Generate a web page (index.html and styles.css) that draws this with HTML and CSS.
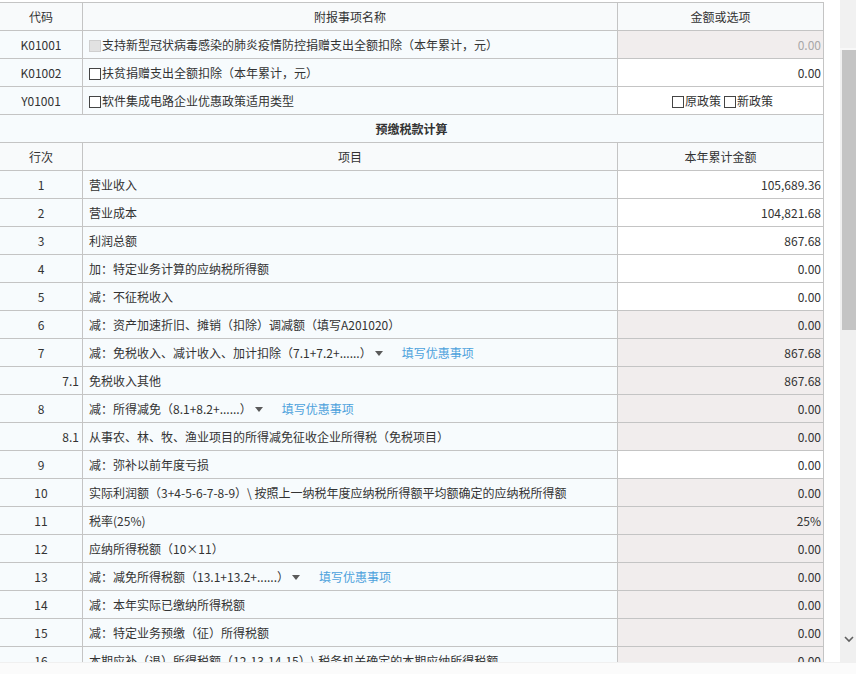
FILE: index.html
```html
<!DOCTYPE html>
<html lang="zh-CN">
<head>
<meta charset="utf-8">
<title>预缴税款计算</title>
<link rel="stylesheet" href="styles.css">
</head>
<body>
<div class="page">
  <div class="screen">
    <div class="viewport">
      <table class="grid">
        <colgroup><col class="c1"><col class="c2"><col class="c3"></colgroup>
        <tr class="head"><th>代码</th><th>附报事项名称</th><th>金额或选项</th></tr>
        <tr><td class="no">K01001</td><td class="name"><span class="cb dis"></span>支持新型冠状病毒感染的肺炎疫情防控捐赠支出全额扣除（本年累计，元）</td><td class="amt ro muted">0.00</td></tr>
        <tr><td class="no">K01002</td><td class="name"><span class="cb"></span>扶贫捐赠支出全额扣除（本年累计，元）</td><td class="amt">0.00</td></tr>
        <tr><td class="no">Y01001</td><td class="name"><span class="cb"></span>软件集成电路企业优惠政策适用类型</td><td class="opts"><span class="cb"></span>原政策<span class="cb gap"></span>新政策</td></tr>
        <tr class="section"><td colspan="3">预缴税款计算</td></tr>
        <tr class="head"><th>行次</th><th>项目</th><th>本年累计金额</th></tr>
        <tr><td class="no">1</td><td class="name">营业收入</td><td class="amt">105,689.36</td></tr>
        <tr><td class="no">2</td><td class="name">营业成本</td><td class="amt">104,821.68</td></tr>
        <tr><td class="no">3</td><td class="name">利润总额</td><td class="amt">867.68</td></tr>
        <tr><td class="no">4</td><td class="name">加：特定业务计算的应纳税所得额</td><td class="amt">0.00</td></tr>
        <tr><td class="no">5</td><td class="name">减：不征税收入</td><td class="amt">0.00</td></tr>
        <tr><td class="no">6</td><td class="name">减：资产加速折旧、摊销（扣除）调减额（填写A201020）</td><td class="amt ro">0.00</td></tr>
        <tr><td class="no">7</td><td class="name">减：免税收入、减计收入、加计扣除（7.1+7.2+......）<span class="caret"></span><a class="link" href="#">填写优惠事项</a></td><td class="amt ro">867.68</td></tr>
        <tr><td class="no sub">7.1</td><td class="name">免税收入其他</td><td class="amt ro">867.68</td></tr>
        <tr><td class="no">8</td><td class="name">减：所得减免（8.1+8.2+......）<span class="caret"></span><a class="link" href="#">填写优惠事项</a></td><td class="amt ro">0.00</td></tr>
        <tr><td class="no sub">8.1</td><td class="name">从事农、林、牧、渔业项目的所得减免征收企业所得税（免税项目）</td><td class="amt ro">0.00</td></tr>
        <tr><td class="no">9</td><td class="name">减：弥补以前年度亏损</td><td class="amt">0.00</td></tr>
        <tr><td class="no">10</td><td class="name">实际利润额（3+4-5-6-7-8-9）\ 按照上一纳税年度应纳税所得额平均额确定的应纳税所得额</td><td class="amt ro">0.00</td></tr>
        <tr><td class="no">11</td><td class="name">税率(25%)</td><td class="amt ro">25%</td></tr>
        <tr><td class="no">12</td><td class="name">应纳所得税额（10×11）</td><td class="amt ro">0.00</td></tr>
        <tr><td class="no">13</td><td class="name">减：减免所得税额（13.1+13.2+......）<span class="caret"></span><a class="link" href="#">填写优惠事项</a></td><td class="amt ro">0.00</td></tr>
        <tr><td class="no">14</td><td class="name">减：本年实际已缴纳所得税额</td><td class="amt ro">0.00</td></tr>
        <tr><td class="no">15</td><td class="name">减：特定业务预缴（征）所得税额</td><td class="amt ro">0.00</td></tr>
        <tr><td class="no">16</td><td class="name">本期应补（退）所得税额（12-13-14-15）\ 税务机关确定的本期应纳所得税额</td><td class="amt ro">0.00</td></tr>
      </table>
    </div>
    <div class="scrollbar">
      <div class="track-top"></div>
      <div class="thumb"></div>
      <div class="track-rest">
        <svg class="arrow" width="10" height="7" viewBox="0 0 10 7"><polyline points="1,1 5,5 9,1" fill="none" stroke="#606060" stroke-width="1.6"/></svg>
      </div>
    </div>
  </div>
  <div class="footer"></div>
</div>
</body>
</html>
```
FILE: styles.css
```css
* { box-sizing: border-box; }
html, body { margin: 0; padding: 0; background: #fff; }
body {
  font-family: "Noto Sans CJK SC", "Noto Sans", sans-serif;
  font-size: 12px;
  color: #333;
}
.page { width: 856px; height: 674px; display: flex; flex-direction: column; overflow: hidden; }
.screen { display: flex; height: 662px; }
.viewport { width: 840px; height: 662px; overflow: hidden; padding-top: 2px; }
.grid {
  width: 824px;
  table-layout: fixed;
  border-collapse: separate;
  border-spacing: 0;
  border-top: 1px solid #c4c4c4;
}
.grid col.c1 { width: 83px; }
.grid col.c2 { width: 535px; }
.grid col.c3 { width: 206px; }
.grid th, .grid td {
  box-sizing: content-box;
  height: 27px;
  padding: 0;
  border-right: 1px solid #c4c4c4;
  border-bottom: 1px solid #c4c4c4;
  white-space: nowrap;
  overflow: hidden;
  vertical-align: middle;
  background: #f7fbfd;
}
.grid th { font-weight: normal; text-align: center; background: #f8fafb; }
.grid td.no { text-align: center; }
.grid td.no.sub { text-align: right; padding-right: 3px; }
.grid td.name { padding-left: 6px; }
.grid td.amt { text-align: right; padding-right: 2px; background: #fff; }
.grid td.amt.ro { background: #f1eded; }
.grid td.muted { color: #a8a8a8; }
.grid td.opts { text-align: center; background: #fff; padding-left: 4px; }
.section td { text-align: center; font-weight: bold; background: #f7fbfd; }
.cb {
  display: inline-block;
  width: 12px;
  height: 12px;
  border: 1px solid #444;
  background: #fff;
  vertical-align: -2px;
  margin-right: 1px;
}
.cb.dis { border-color: #cfcfcf; background: #e2e2e2; }
.cb.gap { margin-left: 3px; }
.caret {
  display: inline-block;
  width: 0; height: 0;
  border-left: 4px solid transparent;
  border-right: 4px solid transparent;
  border-top: 5px solid #5a5a5a;
  margin-left: 3px;
  vertical-align: 2px;
}
.link { color: #4da2dc; text-decoration: none; margin-left: 19px; }
.scrollbar { width: 16px; height: 662px; display: flex; flex-direction: column; background: #f0f0f0; }
.track-top { height: 50px; background: #f1f1f1; border-bottom: 2px solid #f8f8f8; }
.thumb { height: 280px; background: #c4c4c4; margin-left: 2px; }
.track-rest { flex: 1; display: flex; flex-direction: column; justify-content: flex-end; align-items: center; padding-bottom: 19px; background: #f0f0f0; }
.arrow { display: block; margin-left: 2px; }
.footer { height: 12px; background: #fbfbfb; border-top: 1px solid #f0f0f0; }
```
